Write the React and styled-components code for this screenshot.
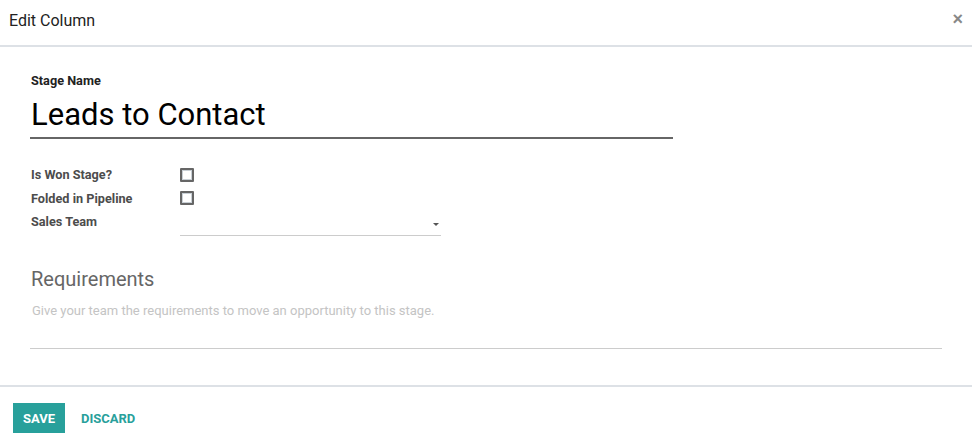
import { createGlobalStyle, styled } from "styled-components";

const GlobalStyle = createGlobalStyle`
  body {
    margin: 0;
    background: #fff;
    font-family: Roboto, "Liberation Sans", sans-serif;
    color: #4c4c4c;
  }
`;

const Dialog = styled.div`
  width: 972px;
  height: 446px;
  display: flex;
  flex-direction: column;
  background: #fff;
`;

const Header = styled.div`
  height: 45px;
  display: flex;
  align-items: center;
  justify-content: space-between;
  padding: 0 9px 0 9px;
  border-bottom: 2px solid #dde1e6;
  box-sizing: content-box;
`;

const Title = styled.h4`
  margin: 0;
  margin-top: -5px;
  font-size: 16px;
  font-weight: 400;
  color: #222;
`;

const Close = styled.button`
  border: none;
  background: none;
  padding: 0;
  margin-top: -8px;
  font-size: 18px;
  font-weight: 700;
  color: #888;
  line-height: 1;
  cursor: pointer;
`;

const Body = styled.div`
  flex: 1;
  padding: 26px 30px 0 30px;
  border-bottom: 2px solid #dde1e6;
`;

const SmallLabel = styled.label`
  display: block;
  font-size: 12.7px;
  font-weight: 700;
  color: ${(p) => (p.$dark ? "#222" : "#4c4c4c")};
  padding-left: 1px;
`;

const NameInput = styled.div`
  width: 641px;
  margin-top: 8px;
  padding: 0 1px 4px;
  font-size: 31px;
  line-height: 37px;
  color: #000;
  border-bottom: 2px solid #666;
`;

const FieldGrid = styled.div`
  display: grid;
  grid-template-columns: 150px 261px;
  grid-auto-rows: 23.5px;
  margin-top: 24px;
  align-items: center;
`;

const Checkbox = styled.span`
  display: block;
  width: 10px;
  height: 10px;
  border: 2px solid #666;
  box-shadow: inset 0 0 0 1px #c9d0d6;
  border-radius: 1px;
`;

const Select = styled.div`
  position: relative;
  height: 23px;
  border-bottom: 1px solid #ccc;
  margin-top: 4px;
`;

const Caret = styled.span`
  position: absolute;
  right: 2px;
  top: 11px;
  width: 0;
  height: 0;
  border-left: 3px solid transparent;
  border-right: 3px solid transparent;
  border-top: 3px solid #555;
`;

const SectionTitle = styled.h3`
  margin: 33px 0 0 1px;
  font-size: 20px;
  font-weight: 400;
  color: #666;
`;

const Placeholder = styled.div`
  margin-top: 12px;
  padding: 0 1px 30px 2px;
  font-size: 13px;
  color: #c4c4c4;
  border-bottom: 1px solid #ccc;
  width: 909px;
`;

const Footer = styled.div`
  height: 59px;
  display: flex;
  align-items: center;
  gap: 16px;
  padding: 3px 13px 0;
  box-sizing: border-box;
`;

const Button = styled.button`
  border: none;
  font-family: inherit;
  font-size: 13px;
  font-weight: 700;
  height: 30px;
  padding: 0 ${(p) => (p.$primary ? "10px" : "0")};
  background: ${(p) => (p.$primary ? "#28a09b" : "transparent")};
  color: ${(p) => (p.$primary ? "#fff" : "#28a09b")};
  cursor: pointer;
`;

const fields = [
  { label: "Is Won Stage?", kind: "check" },
  { label: "Folded in Pipeline", kind: "check" },
  { label: "Sales Team", kind: "select" },
];

export default function App() {
  return (
    <>
      <GlobalStyle />
      <Dialog>
        <Header>
          <Title>Edit Column</Title>
          <Close>×</Close>
        </Header>
        <Body>
          <SmallLabel $dark>Stage Name</SmallLabel>
          <NameInput>Leads to Contact</NameInput>
          <FieldGrid>
            {fields.map((f) => (
              <>
                <SmallLabel key={f.label}>{f.label}</SmallLabel>
                {f.kind === "check" ? (
                  <Checkbox />
                ) : (
                  <Select>
                    <Caret />
                  </Select>
                )}
              </>
            ))}
          </FieldGrid>
          <SectionTitle>Requirements</SectionTitle>
          <Placeholder>
            Give your team the requirements to move an opportunity to this stage.
          </Placeholder>
        </Body>
        <Footer>
          <Button $primary>SAVE</Button>
          <Button>DISCARD</Button>
        </Footer>
      </Dialog>
    </>
  );
}
